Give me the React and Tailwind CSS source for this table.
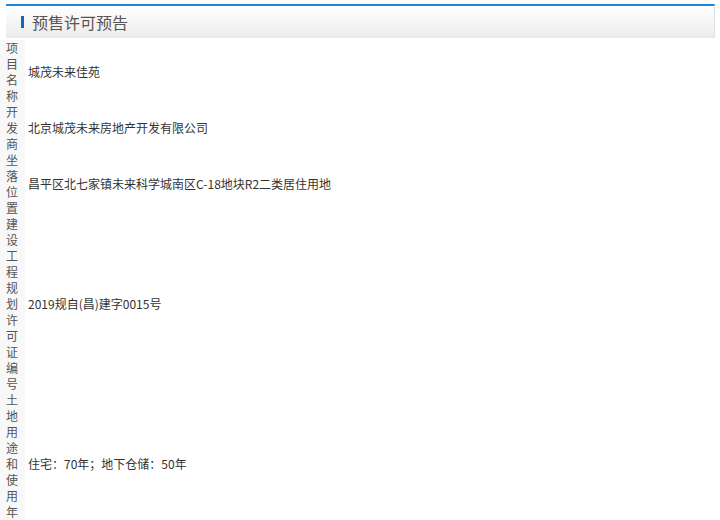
const rows = [
    { label: '项目名称', value: '城茂未来佳苑' },
    { label: '开发商', value: '北京城茂未来房地产开发有限公司' },
    { label: '坐落位置', value: '昌平区北七家镇未来科学城南区C-18地块R2二类居住用地' },
    { label: '建设工程规划许可证编号', value: '2019规自(昌)建字0015号' },
    { label: '土地用途和使用年限', value: '住宅：70年；地下仓储：50年' },
];

export default function App() {
    return (
        <div className="w-[720px] h-[520px] overflow-hidden bg-white font-['Noto_Sans_CJK_SC',sans-serif] text-[12px] text-[#333]">
            {/* header */}
            <div className="pt-[4px] pl-[6px] pr-[5px]">
                <div className="h-[34px] border-t-2 border-[#1c87d6] border-r border-r-[#e2e2e2] bg-gradient-to-b from-white to-[#ebebeb] flex items-center pl-[15px]">
                    <span className="w-[3px] h-[12px] bg-[#1565c0] mr-[8px]"></span>
                    <span className="text-[16px] text-[#555] leading-none">预售许可预告</span>
                </div>
            </div>

            {/* table */}
            <div className="mt-[2px]">
                {rows.map((row) => (
                    <div key={row.label} className="flex">
                        <div className="w-[25px] shrink-0 bg-[#f8f8f8] pl-[6px] pr-[7px] text-[#555] leading-[16px] break-all">
                            {row.label}
                        </div>
                        <div className="flex items-center pl-[3px] leading-[16px]">
                            {row.value}
                        </div>
                    </div>
                ))}
            </div>
        </div>
    );
}
